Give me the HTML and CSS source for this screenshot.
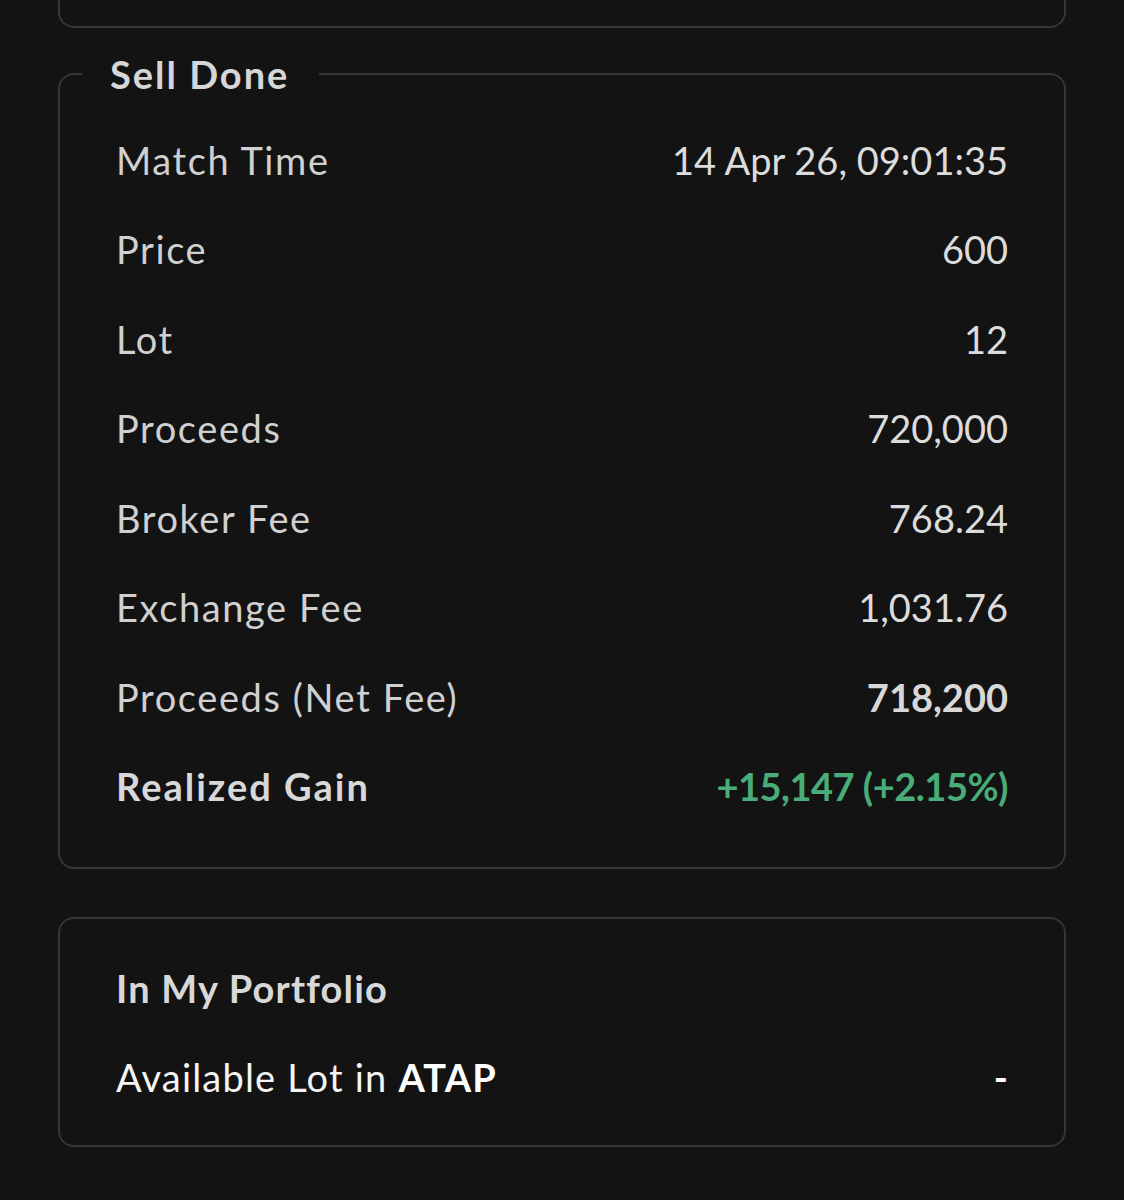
FILE: index.html
```html
<!doctype html>
<html lang="en">
<head>
    <meta charset="UTF-8">
    <title>Order Detail</title>
    <link rel="stylesheet" href="styles.css">
</head>
<body>
    <div class="card card-tail"></div>

    <fieldset class="card done">
        <legend>Sell Done</legend>
        <div class="row"><span class="label">Match Time</span><span class="value">14 Apr 26, 09:01:35</span></div>
        <div class="row"><span class="label">Price</span><span class="value">600</span></div>
        <div class="row"><span class="label">Lot</span><span class="value">12</span></div>
        <div class="row"><span class="label">Proceeds</span><span class="value">720,000</span></div>
        <div class="row"><span class="label">Broker Fee</span><span class="value">768.24</span></div>
        <div class="row"><span class="label">Exchange Fee</span><span class="value">1,031.76</span></div>
        <div class="row"><span class="label">Proceeds (Net Fee)</span><span class="value strong">718,200</span></div>
        <div class="row"><span class="label strong">Realized Gain</span><span class="value strong gain">+15,147 (+2.15%)</span></div>
    </fieldset>

    <div class="card portfolio">
        <div class="row"><span class="label strong title">In My Portfolio</span></div>
        <div class="row bright"><span class="label">Available Lot in <b>ATAP</b></span><span class="value">-</span></div>
    </div>
</body>
</html>
```

FILE: styles.css
```css
body {
    margin: 0;
    padding: 0 58px;
    background-color: #131313;
    font-family: 'Lato', 'Open Sans', sans-serif;
    font-size: 38px;
    color: #d0d0d0;
}
.card {
    border: 2px solid #363636;
    border-radius: 16px;
    margin: 0;
    padding: 0 56px;
    box-sizing: border-box;
}
.card-tail {
    height: 28px;
    border-top: none;
    border-radius: 0 0 16px 16px;
}
.done {
    margin-top: 24px;
    padding-top: 19px;
    padding-bottom: 36px;
    min-width: 0;
}
.done legend {
    margin-left: -34px;
    padding: 0 30px 0 28px;
    font-weight: 700;
    line-height: 44px;
    letter-spacing: 2px;
    color: #d6d6d6;
}
.row {
    height: 89.5px;
    display: flex;
    justify-content: space-between;
    align-items: center;
}
.label {
    letter-spacing: 1.6px;
}
.value {
    color: #dcdcdc;
}
.strong {
    font-weight: 700;
    color: #d8d8d8;
}
.label.strong {
    letter-spacing: 2px;
}
.label.title {
    letter-spacing: 1.2px;
}
.gain {
    color: #4aad79;
    letter-spacing: -0.5px;
}
.portfolio {
    margin-top: 48px;
    padding-top: 24px;
    padding-bottom: 24px;
}
.portfolio .row + .row {
    height: 88px;
}
.bright {
    color: #f4f4f4;
}
.bright .label {
    letter-spacing: 1.2px;
}
.bright b {
    color: #ffffff;
}
.bright .value {
    color: #ffffff;
    font-weight: 700;
}
```
